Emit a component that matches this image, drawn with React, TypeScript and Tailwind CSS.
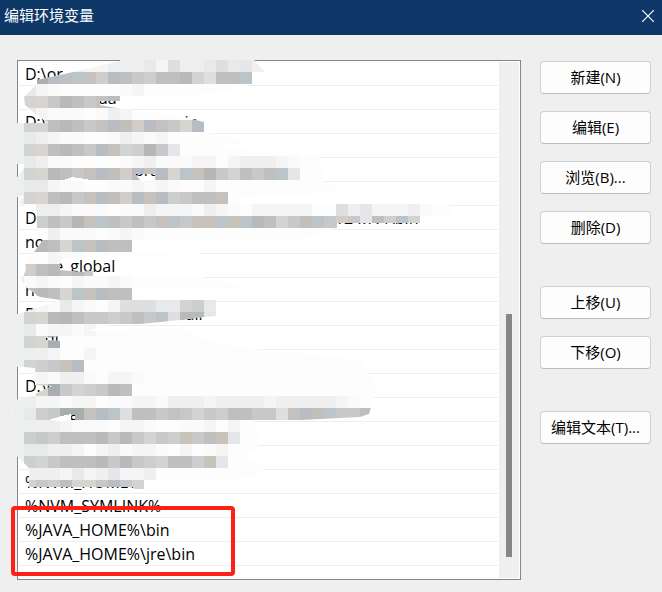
import React from 'react';

type Piece = { text: string; gap?: string };

const entries: Piece[][] = [
  [{ text: 'D:\\or' }],
  [{ text: 'da', gap: 'ml-[73px]' }],
  [{ text: 'D:\\' }, { text: 'bin', gap: 'ml-[128px]' }],
  [],
  [{ text: 'bra', gap: 'ml-[109px]' }],
  [],
  [{ text: 'D:' }, { text: '124.7.4\\bin', gap: 'ml-[294px]' }],
  [{ text: 'no' }],
  [{ text: 'node_global' }],
  [{ text: 'no' }],
  [{ text: 'D:' }, { text: '\\dll', gap: 'ml-[138px]' }],
  [{ text: 'qu', gap: 'ml-[20px]' }],
  [],
  [{ text: 'D:\\e' }],
  [{ text: 'g', gap: 'ml-[45px]' }, { text: '\\bin', gap: 'ml-[254px]' }],
  [],
  [],
  [{ text: '%NVM_HOME%' }],
  [{ text: '%NVM_SYMLINK%' }],
  [{ text: '%JAVA_HOME%\\bin' }],
  [{ text: '%JAVA_HOME%\\jre\\bin' }],
];

const palette: Record<string, string> = {
  a: '#d2d3d3',
  b: '#d8d4d0',
  c: '#bfbfc0',
  d: '#b9b9ba',
  e: '#c7c8ca',
  f: '#c7c1be',
  g: '#b7bdc2',
  h: '#d3cdca',
  i: '#c1bfbc',
  j: '#bbc4c8',
  k: '#cdcfcf',
  l: '#e5e6e9',
  m: '#b5b7b4',
  n: '#c7c3b9',
  o: '#a7aeb0',
  p: '#dfdfe0',
  q: '#e8e9e9',
  r: '#efefef',
  s: '#f5f5f5',
  t: '#fafafa',
  u: '#edeeee',
};

// One character is one 12px block; '.' leaves a block empty.
const blocks: [number, number, string][] = [
  [60, 60, 'rrssrurqsprrqpqlrs'],
  [24, 72, 'uogcjfhgcekcidapicjl'],
  [24, 84, 'qst.....ts'],
  [24, 96, 'abedcefg'],
  [24, 108, 'qsttt.trs'],
  [24, 120, 'aaidcefgihgfebgk'],
  [24, 132, 'qrstt..trsts'],
  [24, 144, 'abcdcegfakmel'],
  [24, 156, 'qrtt....tsrtttss.srrrst'],
  [24, 168, 'abdcefgihgfgbjfmeaieijl'],
  [24, 180, 'qqstt..ttstst..s'],
  [24, 192, 'abcdefgihgfgkeccf'],
  [36, 204, 'rusttt.ttussstrst.sssss..prlsssrt'],
  [36, 216, 'kcemfjieiefjefnjnjdcaeijehelckjak'],
  [48, 228, 'rttt.tst'],
  [24, 240, 'ddcbjfgic'],
  [48, 252, 'stt...'],
  [24, 264, 'hcdcde'],
  [24, 276, 'tst.sttst'],
  [24, 288, 'cdcbjfgic'],
  [24, 300, 'uustqst.spppqqakqs'.slice(1)],
  [24, 312, 'abdmceekecejpddl'],
  [24, 324, 'qtssts'],
  [24, 336, 'abo'],
  [24, 348, 'urs..s'],
  [24, 360, 'akeng'],
  [36, 372, 'strrt.sst'],
  [36, 384, 'boeakedi'],
  [24, 396, 'uusstss.ttsstrrrsrrrrsrrrrrst...rrrrst'.slice(1)],
  [24, 408, 'qkeoofgjpciefeaekiieepfgijeeiahkml'],
  [24, 420, 'urrsttt.sst..tts.s'],
  [24, 432, 'kekcicdedeaeknecnl'],
  [24, 444, 'qqrrs.srtsst.s.ts'],
  [24, 456, 'kaecccdedekaicknl'],
  [24, 468, 'rrrsqsrlssr'],
  [24, 480, 'aekcbbegeakk'],
];

const smear =
  'M37 80 60 75 95 67 120 61 120 60 254 60 265 72 252 72 252 84 225 91 190 95 120 96 120 101 100 101 100 105 110 107 140 111 180 116 204 122 204 132 250 143 200 146 320 156 323 182 350 190 300 195 240 197 240 204 450 204 450 216 420 216 420 223 337 223 337 228 300 240 200 240 132 240 132 252 200 253 200 255 110 256 62 259 60 264 60 270 80 272 93 271 93 276 148 277 201 277 250 288 132 289 140 300 216 300 216 316 204 317 180 320 140 324 110 325 85 331 180 328 220 345 360 360 376 385 374 398 369 414 360 417 300 420 252 421 258 434 258 450 243 455 265 468 260 478 144 480 144 489 134 489 134 487 29 487 29 468 17 456 17 447 12 446 12 420 13 401 24 398 35 394 52 386 35 385 35 368 24 367 12 366 12 330 14 315 22 313 60 300 40 297 27 288 24 284 21 280 24 274 26 270 25 262 34 252 43 240 50 236 37 236 37 211 19 203 24 196 17 197 13 190 14 182 24 168 24 164 12 164 12 123 48 123 37 115 25 105 24 97 37 84ZM135 174 155 174 155 182 141 181ZM46 338 60 336 60 341 46 340ZM71 415 75 415 75 420 71 420Z';

// Bare strips where the smear missed the page underneath.
const strips = 'M64 180 72 177 85 179 100 182 110 187 90 182ZM48 420 62 416 71 414 71 420 60 421Z';

function Smear() {
  return (
    <svg
      aria-hidden="true"
      className="pointer-events-none absolute left-0 top-0"
      width="460"
      height="465"
      viewBox="0 35 460 465"
      shapeRendering="crispEdges"
    >
      <clipPath id="smear">
        <path d={smear} clipRule="evenodd" />
      </clipPath>
      <g clipPath="url(#smear)">
        <rect x="0" y="35" width="460" height="465" fill="#fdfdfd" />
        <rect x="0" y="35" width="24" height="465" fill="#edeeee" />
        {blocks.map(([x, y, cells]) =>
          cells
            .split('')
            .map((c, i) =>
              c === '.' ? null : (
                <rect key={`${y}-${i}`} x={x + i * 12} y={y} width="12" height="12" fill={palette[c]} />
              ),
            ),
        )}
      </g>
      <path d={strips} fill="#ffffff" />
    </svg>
  );
}

const groups = [
  ['新建(N)', '编辑(E)', '浏览(B)...', '删除(D)'],
  ['上移(U)', '下移(O)'],
  ['编辑文本(T)...'],
];

export default function App() {
  return (
    <div className="min-h-screen bg-[#efefef] font-['Open_Sans','Noto_Sans_CJK_SC',sans-serif] text-[15px] text-black">
      <header className="flex h-[35px] items-center justify-between bg-[#0d3868] pl-1 pr-2 text-white">
        <h1 className="pb-[6px] leading-5">编辑环境变量</h1>
        <button type="button" aria-label="关闭" className="pb-1">
          <svg width="12" height="12" viewBox="0 0 12 12" stroke="currentColor" strokeWidth="1.2" fill="none">
            <path d="M0 0 12 12M12 0 0 12" />
          </svg>
        </button>
      </header>

      <main className="relative flex items-start gap-[19px] pb-3 pl-[17px] pr-[11px] pt-[25px]">
        <div className="flex min-w-0 flex-1 border border-[#828790] bg-white p-px">
          <ul className="min-w-0 flex-1 pb-3 pr-px text-base">
            {entries.map((pieces, i) => (
              <li key={i} className="flex h-6 whitespace-pre border-b border-[#eeeeee] pl-[6px] leading-6">
                {pieces.map((p) => (
                  <span key={p.text} className={p.gap}>
                    {p.text}
                  </span>
                ))}
              </li>
            ))}
          </ul>
          <div className="flex w-5 flex-col items-center bg-[#efefef] pb-[21px]">
            <div className="mt-auto h-[243px] w-[6px] bg-[#868686]" />
          </div>
        </div>

        <div className="flex w-[111px] flex-col gap-[42px] pt-px">
          {groups.map((labels) => (
            <div key={labels[0]} className="flex flex-col gap-[17px]">
              {labels.map((label) => (
                <button
                  key={label}
                  type="button"
                  className="h-[33px] whitespace-nowrap rounded border border-[#d0d0d0] border-b-[#bbbbbb] bg-[#fdfdfd] pb-[2px] leading-5"
                >
                  {label}
                </button>
              ))}
            </div>
          ))}
        </div>

        <Smear />
        <div className="pointer-events-none absolute left-[11px] top-[471px] h-[70px] w-[224px] rounded border-4 border-[#ff2015]" />
      </main>
    </div>
  );
}
